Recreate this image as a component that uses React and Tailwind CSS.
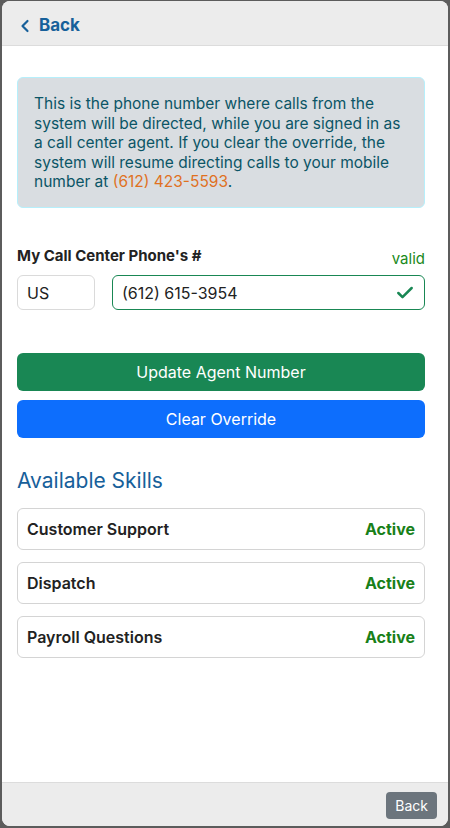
import { Check, ChevronLeft } from "lucide-react";

const skills = ["Customer Support", "Dispatch", "Payroll Questions"];

export default function App() {
  return (
    <div className="h-[828px] w-[450px] bg-[#5c5c5c] pl-[2px] pr-[2px] pt-[1px] pb-[2px]" style={{ fontFamily: "Inter, 'Liberation Sans', sans-serif" }}>
      <div className="flex h-full flex-col overflow-hidden rounded-lg bg-white">
        <header className="flex h-[45px] shrink-0 items-center border-b border-[#dcdcdc] bg-[#ececec] px-[13px] pt-[6px]">
          <button className="flex items-center gap-[4px] text-[17px] font-bold text-[#17609a]">
            <ChevronLeft size={20} strokeWidth={2.6} />
            Back
          </button>
        </header>

        <main className="flex-1 pl-[15px] pr-[23px] pt-[31px]">
          <div className="rounded-md border border-[#b6effb] bg-[#d9dde1] px-[16px] pt-[16px] pb-[15px] text-[15.5px] leading-[19.5px] text-[#0b5566]">
            This is the phone number where calls from the system will be directed, while you are signed in as a call center agent. If you clear the override, the system will resume directing calls to your mobile number at <span className="text-[#e0711f]">(612) 423-5593</span>.
          </div>

          <div className="mt-[37px] flex items-end justify-between">
            <span className="text-[15px] font-bold text-[#222]">My Call Center Phone's #</span>
            <span className="translate-y-[3px] text-[15px] text-[#1b8a1b]">valid</span>
          </div>
          <div className="mt-[8px] flex gap-[17px]">
            <div className="flex h-[35px] w-[78px] items-center rounded-md border border-[#dadada] px-[9px] text-[16px] text-[#222]">US</div>
            <div className="flex h-[35px] flex-1 items-center justify-between rounded-md border border-[#198754] px-[9px] text-[16px] text-[#222]">
              (612) 615-3954
              <Check size={20} strokeWidth={3} className="text-[#198754]" />
            </div>
          </div>

          <div className="mt-[43px] flex flex-col gap-[9px]">
            <button className="h-[38px] rounded-md bg-[#198754] text-[16px] text-white">Update Agent Number</button>
            <button className="h-[38px] rounded-md bg-[#0d6efd] text-[16px] text-white">Clear Override</button>
          </div>

          <h2 className="mt-[27px] text-[21px] text-[#17609a]">Available Skills</h2>
          <div className="mt-[11px] flex flex-col gap-[12px]">
            {skills.map((s) => (
              <div key={s} className="flex h-[42px] items-center justify-between rounded-md border border-[#d4d4d4] px-[9px] text-[16px] font-semibold">
                <span className="text-[#222]">{s}</span>
                <span className="font-bold text-[#188018]">Active</span>
              </div>
            ))}
          </div>
        </main>

        <footer className="flex h-[44px] shrink-0 items-center justify-end border-t border-[#dcdcdc] bg-[#ececec] px-[11px] pt-[2px]">
          <button className="h-[27px] rounded bg-[#6c757d] px-[9px] text-[14px] text-white">Back</button>
        </footer>
      </div>
    </div>
  );
}
